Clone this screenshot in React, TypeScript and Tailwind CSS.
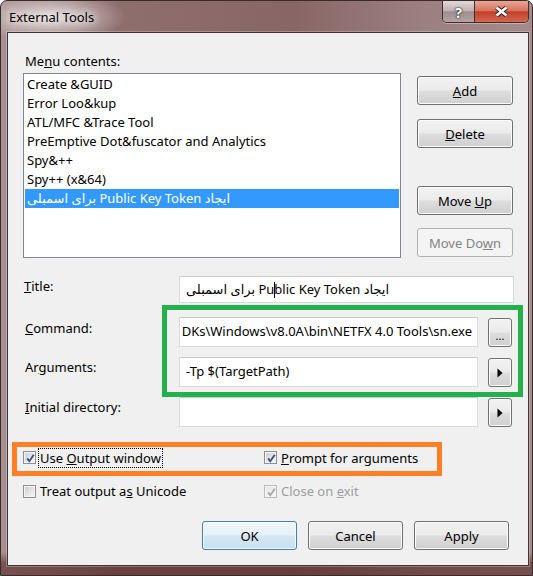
import React from "react";

const menuItems = [
  ["Create ", "&GUID"],
  ["Error Loo", "&kup"],
  ["ATL/MFC ", "&Trace Tool"],
  ["PreEmptive Dot", "&fuscator and Analytics"],
  ["Spy", "&++"],
  ["Spy++ (x", "&64)"],
];

const btnNormal =
  "h-[29px] rounded-[3px] border border-[#707070] text-black flex items-center justify-center bg-[linear-gradient(180deg,#f2f2f2_0%,#ebebeb_48%,#dddddd_52%,#cfcfcf_100%)] shadow-[inset_0_0_0_1px_#fcfcfc]";
const btnDefault =
  "h-[29px] rounded-[3px] border border-[#3c7fb1] text-black flex items-center justify-center bg-[linear-gradient(180deg,#f0f7fc_0%,#e6f0f8_48%,#d6e7f4_52%,#c9dfef_100%)] shadow-[inset_0_0_0_1px_#f6fbff]";
const btnDisabled =
  "h-[29px] rounded-[3px] border border-[#adb2b5] text-[#838383] flex items-center justify-center bg-[#f4f4f4]";

function CheckBox({ checked, disabled }: { checked?: boolean; disabled?: boolean }) {
  return (
    <span
      className={
        disabled
          ? "relative w-[13px] h-[13px] shrink-0 border border-[#bcbcbc] bg-[#f4f4f4] p-[1px] flex"
          : "relative w-[13px] h-[13px] shrink-0 border border-[#8e8f8f] bg-[#f4f4f4] p-[1px] flex"
      }
    >
      <span
        className={
          disabled
            ? "flex-1 bg-[linear-gradient(135deg,#e6e6e6,#f8f8f8)]"
            : "flex-1 bg-[linear-gradient(135deg,#cdd0d5,#f5f5f5)]"
        }
      />
      {checked && (
        <svg className="absolute left-[1px] top-[1px]" width="11" height="11" viewBox="0 0 11 11">
          <path
            d="M2.2 5.4 L4.3 8.2 L8.8 1.8"
            fill="none"
            stroke={disabled ? "#a8a8a8" : "#3f5183"}
            strokeWidth="1.9"
          />
        </svg>
      )}
    </span>
  );
}

function Arrow() {
  return (
    <svg width="6" height="10" viewBox="0 0 6 10">
      <polygon points="0.5,0.5 5.5,5 0.5,9.5" fill="#000" />
    </svg>
  );
}

export default function App() {
  return (
    <div className="w-[533px] h-[576px] overflow-hidden font-['Noto_Sans','DejaVu_Sans',sans-serif] text-[13px] leading-[16px] text-black">
      <div className="h-full flex flex-col rounded-t-[7px] border border-[#3a2b2b] bg-[linear-gradient(180deg,rgba(0,0,0,0)_96%,rgba(70,20,20,0.5)_98%),radial-gradient(ellipse_75px_26px_at_50px_16px,rgba(255,255,255,0.7),rgba(255,255,255,0)),linear-gradient(90deg,#a89090_0%,#8f6e6e_22%,#896666_55%,#9c8080_80%,#a48a8a_100%)]">
        {/* title bar */}
        <div className="h-[31px] flex items-start justify-between shrink-0">
          <div className="pl-[8px] pt-[8px] [text-shadow:0_0_8px_#fff,0_0_10px_#fff]">External Tools</div>
          <div className="flex mr-[3px] h-[22px] rounded-b-[5px] border border-t-0 border-[#3d2f2f] overflow-hidden shadow-[0_1px_0_rgba(255,255,255,0.35)]">
            <div className="w-[32px] border-r border-[#3d2f2f] flex items-center justify-center bg-[linear-gradient(180deg,#e2d9d9_0%,#c2b3b3_45%,#a08e8e_52%,#b5a3a3_100%)] text-white font-bold text-[15px] [text-shadow:0_0_1px_#222,0_0_1px_#222,0_0_2px_#333]">
              ?
            </div>
            <div className="w-[53px] flex items-center justify-center bg-[linear-gradient(180deg,#e9a797_0%,#d77560_45%,#c3402a_52%,#d5674f_100%)]">
              <svg width="15" height="11" viewBox="0 0 15 11">
                <path d="M2.5 1.5 L12.5 9.5 M12.5 1.5 L2.5 9.5" stroke="#3b2020" strokeWidth="4.6" />
                <path d="M2.5 1.5 L12.5 9.5 M12.5 1.5 L2.5 9.5" stroke="#fff" strokeWidth="2.6" />
              </svg>
            </div>
          </div>
        </div>

        {/* client area */}
        <div className="relative flex-1 ml-[6px] mr-[3px] mb-[9px] border border-[#3e3636] bg-[#f0f0f0] pl-[15px] pt-[20px] shadow-[0_0_0_1px_rgba(255,255,255,0.25)]">
          <div className="flex items-start">
            <div className="w-[378px]">
              <div className="pl-[2px]">
                Me<u>n</u>u contents:
              </div>
              <div className="mt-[4px] h-[185px] border border-[#828790] bg-white pt-[1px]">
                {menuItems.map(([a, b]) => (
                  <div key={a + b} className="mx-[1px] pl-[2px] h-[19px] leading-[19px] whitespace-nowrap">
                    {a}
                    {b}
                  </div>
                ))}
                <div className="mx-[1px] pl-[2px] h-[19px] leading-[19px] bg-[#3399ff] text-white whitespace-nowrap">
                  <span dir="rtl">ایجاد Public Key Token برای اسمبلی</span>
                </div>
              </div>
            </div>
            <div className="ml-[16px] w-[96px] mt-[23px] flex flex-col">
              <button className={btnNormal}>
                <span>
                  <u>A</u>dd
                </span>
              </button>
              <button className={btnNormal + " mt-[14px]"}>
                <span>
                  <u>D</u>elete
                </span>
              </button>
              <button className={btnNormal + " mt-[38px]"}>
                <span>
                  Move <u>U</u>p
                </span>
              </button>
              <button className={btnDisabled + " mt-[13px]"}>
                <span>
                  Move Do<u>w</u>n
                </span>
              </button>
            </div>
          </div>

          {/* form rows */}
          <div className="mt-[18px] flex items-start">
            <div className="w-[156px] pl-[1px] pt-[2px]">
              <u>T</u>itle:
            </div>
            <div className="w-[335px] h-[27px] border border-[#d9dadf] border-t-[#c9cbd1] bg-white pl-[6px] pt-[4px] whitespace-nowrap overflow-hidden">
              <span dir="rtl">
                ایجاد Pu
                <span className="inline-block w-[1px] h-[16px] bg-black align-[-4px] mr-[-1px]" />
                blic Key Token برای اسمبلی
              </span>
            </div>
          </div>

          <div className="mt-[14px] flex items-start">
            <div className="w-[156px] pl-[2px] pt-[3px]">
              <u>C</u>ommand:
            </div>
            <div className="w-[299px] h-[30px] border border-[#d9dadf] border-t-[#c9cbd1] bg-white pl-[2px] pr-[5px] pt-[5px]">
              <div className="overflow-hidden flex justify-end">
                <span className="shrink-0 whitespace-nowrap">
                  C:\Program Files (x86)\Microsoft SDKs\Windows\v8.0A\bin\NETFX 4.0 Tools\sn.exe
                </span>
              </div>
            </div>
            <button className={btnNormal + " ml-[10px] mt-[1px] w-[24px] pt-[7px] text-[11px]"}>...</button>
          </div>

          <div className="mt-[10px] flex items-start">
            <div className="w-[156px] pl-[2px] pt-[2px]">
              Ar<u>g</u>uments:
            </div>
            <div className="w-[299px] h-[30px] border border-[#d9dadf] border-t-[#c9cbd1] bg-white pl-[6px] pt-[5px] whitespace-nowrap">
              -Tp $(TargetPath)
            </div>
            <button className={btnNormal + " ml-[10px] mt-[1px] w-[24px]"}>
              <Arrow />
            </button>
          </div>

          <div className="mt-[10px] flex items-start">
            <div className="w-[156px] pl-[2px] pt-[2px]">
              <u>I</u>nitial directory:
            </div>
            <div className="w-[299px] h-[30px] border border-[#d9dadf] border-t-[#c9cbd1] bg-white" />
            <button className={btnNormal + " ml-[10px] mt-[1px] w-[24px]"}>
              <Arrow />
            </button>
          </div>

          {/* checkboxes */}
          <div className="mt-[21px] flex items-start">
            <div className="w-[241px] flex items-start">
              <span className="mt-[3px]">
                <CheckBox checked />
              </span>
              <span className="ml-[2px] px-[1px] border border-dotted border-black leading-[18px]">
                Use <u>O</u>utput window
              </span>
            </div>
            <div className="flex items-start">
              <span className="mt-[3px]">
                <CheckBox checked />
              </span>
              <span className="ml-[2px] px-[1px] border border-transparent leading-[18px]">
                <u>P</u>rompt for arguments
              </span>
            </div>
          </div>

          <div className="mt-[15px] flex items-start">
            <div className="w-[241px] flex items-start">
              <span className="mt-[2px]">
                <CheckBox />
              </span>
              <span className="ml-[4px]">
                Treat output a<u>s</u> Unicode
              </span>
            </div>
            <div className="flex items-start text-[#9d9d9d]">
              <span className="mt-[2px]">
                <CheckBox checked disabled />
              </span>
              <span className="ml-[4px]">
                Close on <u>e</u>xit
              </span>
            </div>
          </div>

          {/* dialog buttons */}
          <div className="mt-[22px] pr-[19px] flex justify-end gap-[11px]">
            <button className={btnDefault + " w-[95px]"}>OK</button>
            <button className={btnNormal + " w-[95px]"}>Cancel</button>
            <button className={btnNormal + " w-[95px]"}>Apply</button>
          </div>

          {/* annotation boxes */}
          <div className="absolute left-[154px] top-[272px] w-[361px] h-[92px] border-[5px] border-[#22b14c]" />
          <div className="absolute left-[4px] top-[409px] w-[430px] h-[34px] border-[5px] border-[#ff7f27]" />
        </div>
      </div>
    </div>
  );
}
